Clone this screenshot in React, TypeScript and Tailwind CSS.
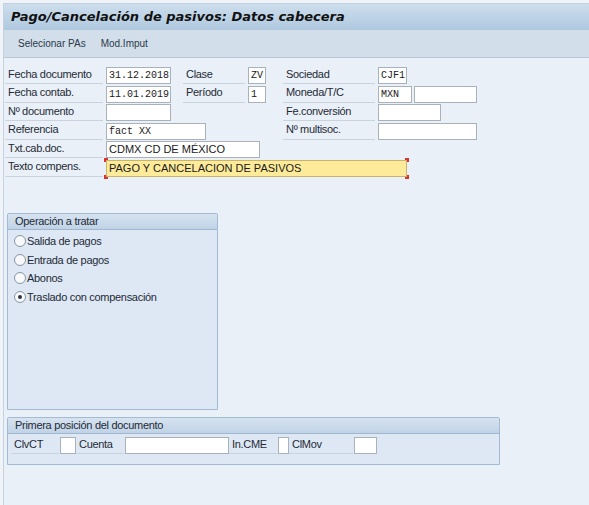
import React from "react";

const sans = { fontFamily: '"Liberation Sans", Arial, sans-serif' };
const mono = { fontFamily: '"Liberation Mono", "Courier New", monospace' };

function Label({ text, w }: { text: string; w: number }) {
  return (
    <div
      className="h-[17px] flex items-end pl-[3px] pb-[1px] border-b border-[#c9d3de] text-[11px] tracking-[-0.3px] text-[#1f2a36] shrink-0 whitespace-nowrap"
      style={{ width: w }}
    >
      {text}
    </div>
  );
}

function Field({
  w,
  value,
  m = true,
  yellow = false,
}: {
  w: number;
  value?: string;
  m?: boolean;
  yellow?: boolean;
}) {
  return (
    <div
      className={`h-[17px] shrink-0 border flex items-center pl-[2px] text-[11px] text-[#1a1a1a] overflow-hidden whitespace-nowrap ${yellow ? "bg-[#fdeb99] border-[#c9b46a]" : "bg-white border-[#a9b1ba]"}`}
      style={{ width: w, ...(m ? { ...mono, fontSize: 10 } : sans) }}
    >
      {value}
    </div>
  );
}

function Radio({ label, checked }: { label: string; checked?: boolean }) {
  return (
    <div className="flex items-center h-[18.5px]">
      <div className="w-[12px] h-[12px] rounded-full border border-[#8796a6] bg-[#f7f9fb] flex items-center justify-center mr-[1px]">
        {checked && <div className="w-[4px] h-[4px] rounded-full bg-[#2c3440]" />}
      </div>
      <span className="text-[11px] tracking-[-0.3px] text-[#1f2a36]">{label}</span>
    </div>
  );
}

function GroupHeader({ title }: { title: string }) {
  return (
    <div className="h-[16px] bg-gradient-to-b from-[#d6e3f0] to-[#c0d3e6] border-b border-[#9fb7cf] pl-[7px] flex items-center text-[11px] tracking-[-0.3px] text-[#1f2a36]">
      {title}
    </div>
  );
}

export default function App() {
  return (
    <div className="w-[589px] h-[505px] bg-[#f0f3f7] pl-[3px] pt-[3px]" style={sans}>
      <div className="w-full h-full bg-[#e9f0f7] border-l border-[#c5d2df] flex flex-col">
        {/* title */}
        <div className="h-[27px] bg-gradient-to-b from-[#cddeed] to-[#afc8df] border-t border-[#c0d1e1] flex items-center pl-[7px]">
          <span
            className="text-[13px] font-bold italic text-[#111]"
            style={{ fontFamily: '"DejaVu Sans", Verdana, sans-serif' }}
          >
            Pago/Cancelación de pasivos: Datos cabecera
          </span>
        </div>
        {/* toolbar */}
        <div className="h-[28px] bg-[#d2dee9] border-b border-[#b4c5d6] flex items-center pl-[14px] gap-[15px] text-[10px] text-[#2b3a4b]">
          <span>Selecionar PAs</span>
          <span>Mod.Imput</span>
        </div>

        {/* header fields */}
        <div className="pl-[1px] pt-[9px] flex flex-col">
          <div className="flex h-[18.5px] items-start">
            <Label text="Fecha documento" w={98} />
            <div className="ml-[3px]"><Field w={65} value="31.12.2018" /></div>
            <div className="ml-[12px]"><Label text="Clase" w={62} /></div>
            <div className="ml-[3px]"><Field w={18} value="ZV" /></div>
            <div className="ml-[17px]"><Label text="Sociedad" w={92} /></div>
            <div className="ml-[3px]"><Field w={29} value="CJF1" /></div>
          </div>
          <div className="flex h-[18.5px] items-start">
            <Label text="Fecha contab." w={98} />
            <div className="ml-[3px]"><Field w={65} value="11.01.2019" /></div>
            <div className="ml-[12px]"><Label text="Período" w={62} /></div>
            <div className="ml-[3px]"><Field w={18} value="1" /></div>
            <div className="ml-[17px]"><Label text="Moneda/T/C" w={92} /></div>
            <div className="ml-[3px]"><Field w={34} value="MXN" /></div>
            <div className="ml-[2px]"><Field w={63} /></div>
          </div>
          <div className="flex h-[18.5px] items-start">
            <Label text="Nº documento" w={98} />
            <div className="ml-[3px]"><Field w={65} /></div>
            <div className="ml-[112px]"><Label text="Fe.conversión" w={92} /></div>
            <div className="ml-[3px]"><Field w={63} /></div>
          </div>
          <div className="flex h-[18.5px] items-start">
            <Label text="Referencia" w={98} />
            <div className="ml-[3px]"><Field w={100} value="fact XX" /></div>
            <div className="ml-[77px]"><Label text="Nº multisoc." w={92} /></div>
            <div className="ml-[3px]"><Field w={99} /></div>
          </div>
          <div className="flex h-[18.5px] items-start">
            <Label text="Txt.cab.doc." w={98} />
            <div className="ml-[3px]"><Field w={154} value="CDMX CD DE MÉXICO" m={false} /></div>
          </div>
          <div className="flex h-[18.5px] items-start">
            <Label text="Texto compens." w={98} />
            <div className="ml-[3px] relative">
              <Field w={301} value="PAGO Y CANCELACION DE PASIVOS" m={false} yellow />
              <div className="absolute -left-[2px] -top-[2px] w-[4px] h-[4px] border-l-2 border-t-2 border-[#d8322f]" />
              <div className="absolute -left-[2px] -bottom-[2px] w-[4px] h-[4px] border-l-2 border-b-2 border-[#d8322f]" />
              <div className="absolute -right-[2px] -top-[2px] w-[4px] h-[4px] border-r-2 border-t-2 border-[#d8322f]" />
              <div className="absolute -right-[2px] -bottom-[2px] w-[4px] h-[4px] border-r-2 border-b-2 border-[#d8322f]" />
            </div>
          </div>
        </div>

        {/* Operación a tratar */}
        <div className="ml-[3px] mt-[35px] w-[211px] h-[197px] border border-[#a3bad2] rounded-t-[2px] bg-[#dde8f4] flex flex-col">
          <GroupHeader title="Operación a tratar" />
          <div className="pl-[6px] pt-[2px] flex flex-col">
            <Radio label="Salida de pagos" />
            <Radio label="Entrada de pagos" />
            <Radio label="Abonos" />
            <Radio label="Traslado con compensación" checked />
          </div>
        </div>

        {/* Primera posición */}
        <div className="ml-[3px] mt-[7px] w-[493px] h-[48px] border border-[#a3bad2] rounded-t-[2px] bg-[#dde8f4] flex flex-col">
          <GroupHeader title="Primera posición del documento" />
          <div className="pl-[3px] pt-[3px] flex items-start h-[18px]">
            <Label text="ClvCT" w={48} />
            <div className="ml-[1px]"><Field w={16} /></div>
            <Label text="Cuenta" w={48} />
            <div className="ml-[1px]"><Field w={104} /></div>
            <Label text="In.CME" w={48} />
            <div className="ml-[1px]"><Field w={11} /></div>
            <Label text="ClMov" w={64} />
            <div className="ml-[1px]"><Field w={23} /></div>
          </div>
        </div>
      </div>
    </div>
  );
}
